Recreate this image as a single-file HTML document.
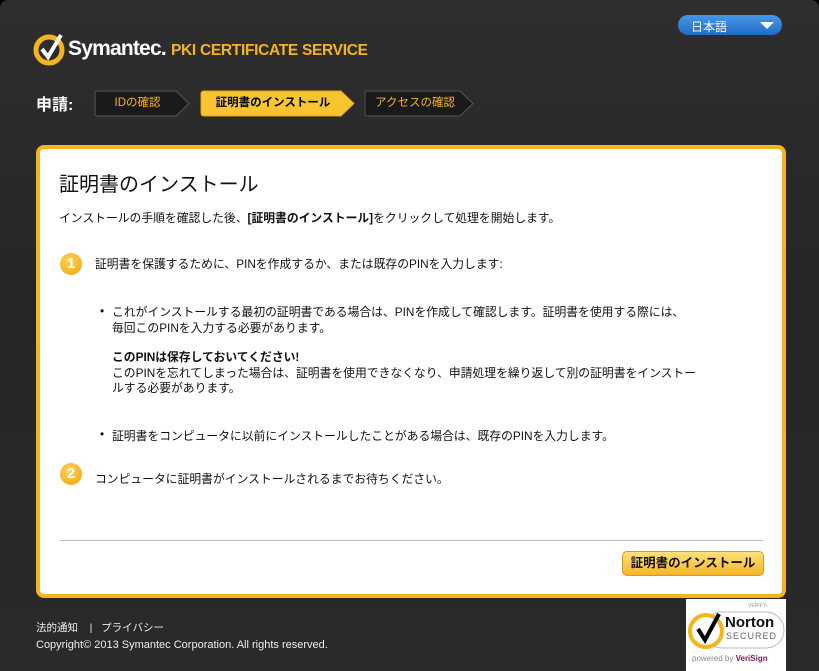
<!DOCTYPE html>
<html><head><meta charset="utf-8"><style>
*{margin:0;padding:0;box-sizing:border-box}
body{width:819px;height:671px;background:#000;font-family:"Liberation Sans","Noto Sans CJK JP",sans-serif;position:relative;overflow:hidden}
.page{position:absolute;left:0;top:0;width:819px;height:671px;background:linear-gradient(#2e2e2e,#262626 300px,#2a2a2a);border-radius:8px 8px 0 0}
.abs{position:absolute;white-space:nowrap}
.lang{left:678px;top:15px;width:104px;height:20px;border-radius:10px;background:linear-gradient(#4a97e6,#1f6cc8);color:#fff;font-size:12px;padding:3px 0 0 13px}
.lang:after{content:"";position:absolute;right:8px;top:7px;border-left:7px solid transparent;border-right:7px solid transparent;border-top:7px solid #fff}
.step{top:91px;height:24px;font-size:11.5px;line-height:24px;text-align:center}
.card{left:36px;top:145px;width:750px;height:453px;background:#fff;border:4px solid #f6b41c;border-radius:8px}
.t{font-size:11.8px;color:#111}
.num{width:22px;height:22px;border-radius:50%;background:radial-gradient(circle at 40% 35%,#ffd35a,#f2a106);color:#fff;font-weight:bold;font-size:15px;text-align:center;line-height:22px}
.btn{left:622px;top:551px;width:142px;height:25px;border-radius:5px;background:linear-gradient(#ffe27a,#f5b628);border:1px solid #d99a1a;font-size:12.5px;font-weight:bold;text-align:center;line-height:23px;color:#111}
.foot{color:#eee;font-size:10.5px}
</style></head><body><div class="page">
<svg class="abs" style="left:33px;top:30px" width="36" height="36" viewBox="0 0 36 36"><circle cx="16" cy="20" r="13" fill="none" stroke="#f6b41c" stroke-width="5"/><path d="M9 19 L15 27 L28 5" fill="none" stroke="#fff" stroke-width="4"/></svg>
<div class="abs" style="left:68px;top:37px;color:#fff;font-size:21px;font-weight:bold;letter-spacing:-0.8px">Symantec.</div>
<div class="abs" style="left:171px;top:42px;color:#f6b41c;font-size:15.5px;font-weight:bold;letter-spacing:-0.3px">PKI CERTIFICATE SERVICE</div>
<div class="abs lang">日本語</div>
<div class="abs" style="left:36px;top:91px;color:#fff;font-size:16px;font-weight:bold">申請:</div>
<svg class="abs" style="left:0;top:90px" width="480" height="28">
<path d="M95 4 Q95 1 98 1 H176 L189 13.5 L176 26 H98 Q95 26 95 23Z" fill="#1a1a1a" stroke="#555"/>
<path d="M201 4 Q201 1 204 1 H341 L354 13.5 L341 26 H204 Q201 26 201 23Z" fill="#f8c531" stroke="#e6a21a"/>
<path d="M365 4 Q365 1 368 1 H460 L473 13.5 L460 26 H368 Q365 26 365 23Z" fill="#1a1a1a" stroke="#555"/>
</svg>
<div class="abs step" style="left:95px;width:85px;color:#f6b41c">IDの確認</div>
<div class="abs step" style="left:203px;width:140px;color:#000;font-weight:bold">証明書のインストール</div>
<div class="abs step" style="left:365px;width:100px;color:#f6b41c">アクセスの確認</div>
<div class="abs card"></div>
<div class="abs" style="left:59px;top:168px;font-size:20px;color:#111">証明書のインストール</div>
<div class="abs t" style="left:59px;top:209px">インストールの手順を確認した後、<b>[証明書のインストール]</b>をクリックして処理を開始します。</div>
<div class="abs num" style="left:60px;top:253px">1</div>
<div class="abs t" style="left:95px;top:255px">証明書を保護するために、PINを作成するか、または既存のPINを入力します:</div>
<div class="abs t" style="left:100px;top:304px">•</div>
<div class="abs t" style="left:112px;top:304px;line-height:16px">これがインストールする最初の証明書である場合は、PINを作成して確認します。証明書を使用する際には、<br>毎回このPINを入力する必要があります。</div>
<div class="abs t" style="left:112px;top:350px;line-height:15.5px"><b>このPINは保存しておいてください!</b><br>このPINを忘れてしまった場合は、証明書を使用できなくなり、申請処理を繰り返して別の証明書をインストー<br>ルする必要があります。</div>
<div class="abs t" style="left:100px;top:427px">•</div>
<div class="abs t" style="left:112px;top:427px">証明書をコンピュータに以前にインストールしたことがある場合は、既存のPINを入力します。</div>
<div class="abs num" style="left:60px;top:463px">2</div>
<div class="abs t" style="left:95px;top:470px">コンピュータに証明書がインストールされるまでお待ちください。</div>
<div class="abs" style="left:60px;top:540px;width:703px;height:1px;background:#bbb"></div>
<div class="abs btn">証明書のインストール</div>
<div class="abs foot" style="left:36px;top:620px">法的通知 &nbsp;&nbsp;&nbsp;| &nbsp;&nbsp;プライバシー</div>
<div class="abs foot" style="left:36px;top:639px;font-size:11px">Copyright© 2013 Symantec Corporation. All rights reserved.</div>
<div class="abs" style="left:686px;top:599px;width:100px;height:72px;background:#fff">
<div class="abs" style="left:62px;top:4px;font-size:5px;color:#999">VERIFY›</div>
<svg class="abs" style="left:0;top:8px" width="100" height="45"><rect x="18" y="5" width="80" height="36" rx="18" fill="none" stroke="#bbb"/><circle cx="20" cy="24" r="16" fill="#fff" stroke="#f6b41c" stroke-width="4"/><path d="M12 22 L19 33 L33 7" fill="none" stroke="#000" stroke-width="4"/></svg>
<div class="abs" style="left:39px;top:15px;font-size:15px;font-weight:bold;color:#111">Norton</div>
<div class="abs" style="left:40px;top:32px;font-size:9px;color:#666;letter-spacing:1px">SECURED</div>
<div class="abs" style="left:6px;top:55px;font-size:8px;color:#888">powered by <b style="color:#8a1a4a">VeriSign</b></div>
</div>
</div></body></html>
